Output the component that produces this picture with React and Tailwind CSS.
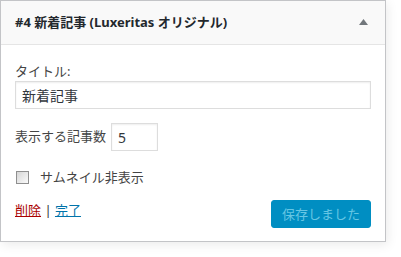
import React from 'react';

const font = { fontFamily: '"Noto Sans", "Noto Sans CJK JP", sans-serif' };

export default function App() {
  return (
    <div className="w-[401px] h-[257px] bg-white text-[#444] text-[13px]" style={font}>
      <div className="w-[386px] bg-white border border-[#c3c4c7] shadow-[2px_3px_10px_rgba(0,0,0,0.08)]">
        {/* Widget header */}
        <div className="h-[44px] bg-[#f9f9f9] border-b border-[#e5e5e5] flex items-center justify-between pl-[14px] pr-[17px]">
          <h3 className="text-[13px] font-bold text-[#23282d] leading-none">
            #4 新着記事 (Luxeritas オリジナル)
          </h3>
          <svg width="9" height="6" viewBox="0 0 9 6" className="mt-[-1px]">
            <path d="M4.5 0 L9 6 L0 6 Z" fill="#72777c" />
          </svg>
        </div>

        {/* Widget body */}
        <div className="px-[14px] pt-[17px] pb-[13px]">
          <label className="block leading-[18px]">タイトル:</label>
          <input
            type="text"
            defaultValue="新着記事"
            className="block w-full h-[28px] mt-[1px] px-[6px] border border-[#ddd] text-[14px] text-[#32373c] shadow-[inset_0_1px_2px_rgba(0,0,0,0.07)] outline-none"
            style={font}
          />

          <div className="flex items-center mt-[14px] h-[28px]">
            <span>表示する記事数</span>
            <input
              type="text"
              defaultValue="5"
              className="ml-[5px] w-[47px] h-[28px] px-[6px] border border-[#ddd] text-[14px] text-[#32373c] shadow-[inset_0_1px_2px_rgba(0,0,0,0.07)] outline-none"
              style={font}
            />
          </div>

          <div className="flex items-center mt-[20px] h-[13px]">
            <span className="w-[13px] h-[13px] ml-[1px] border border-[#8f8f8f] bg-gradient-to-br from-[#d6d6d6] to-[#fafafa]" />
            <span className="ml-[11px]">サムネイル非表示</span>
          </div>

          <div className="flex justify-between items-start mt-[16px]">
            <div className="pt-[1px] leading-[18px]">
              <a href="#" className="text-[#a00] underline">削除</a>
              <span className="text-[#32373c]"> | </span>
              <a href="#" className="text-[#0073aa] underline">完了</a>
            </div>
            <button
              disabled
              className="w-[100px] h-[28px] rounded-[3px] bg-[#008ec2] border border-[#008ec2] text-[#66c6e4] text-[13px] leading-none"
              style={font}
            >
              保存しました
            </button>
          </div>
        </div>
      </div>
    </div>
  );
}
